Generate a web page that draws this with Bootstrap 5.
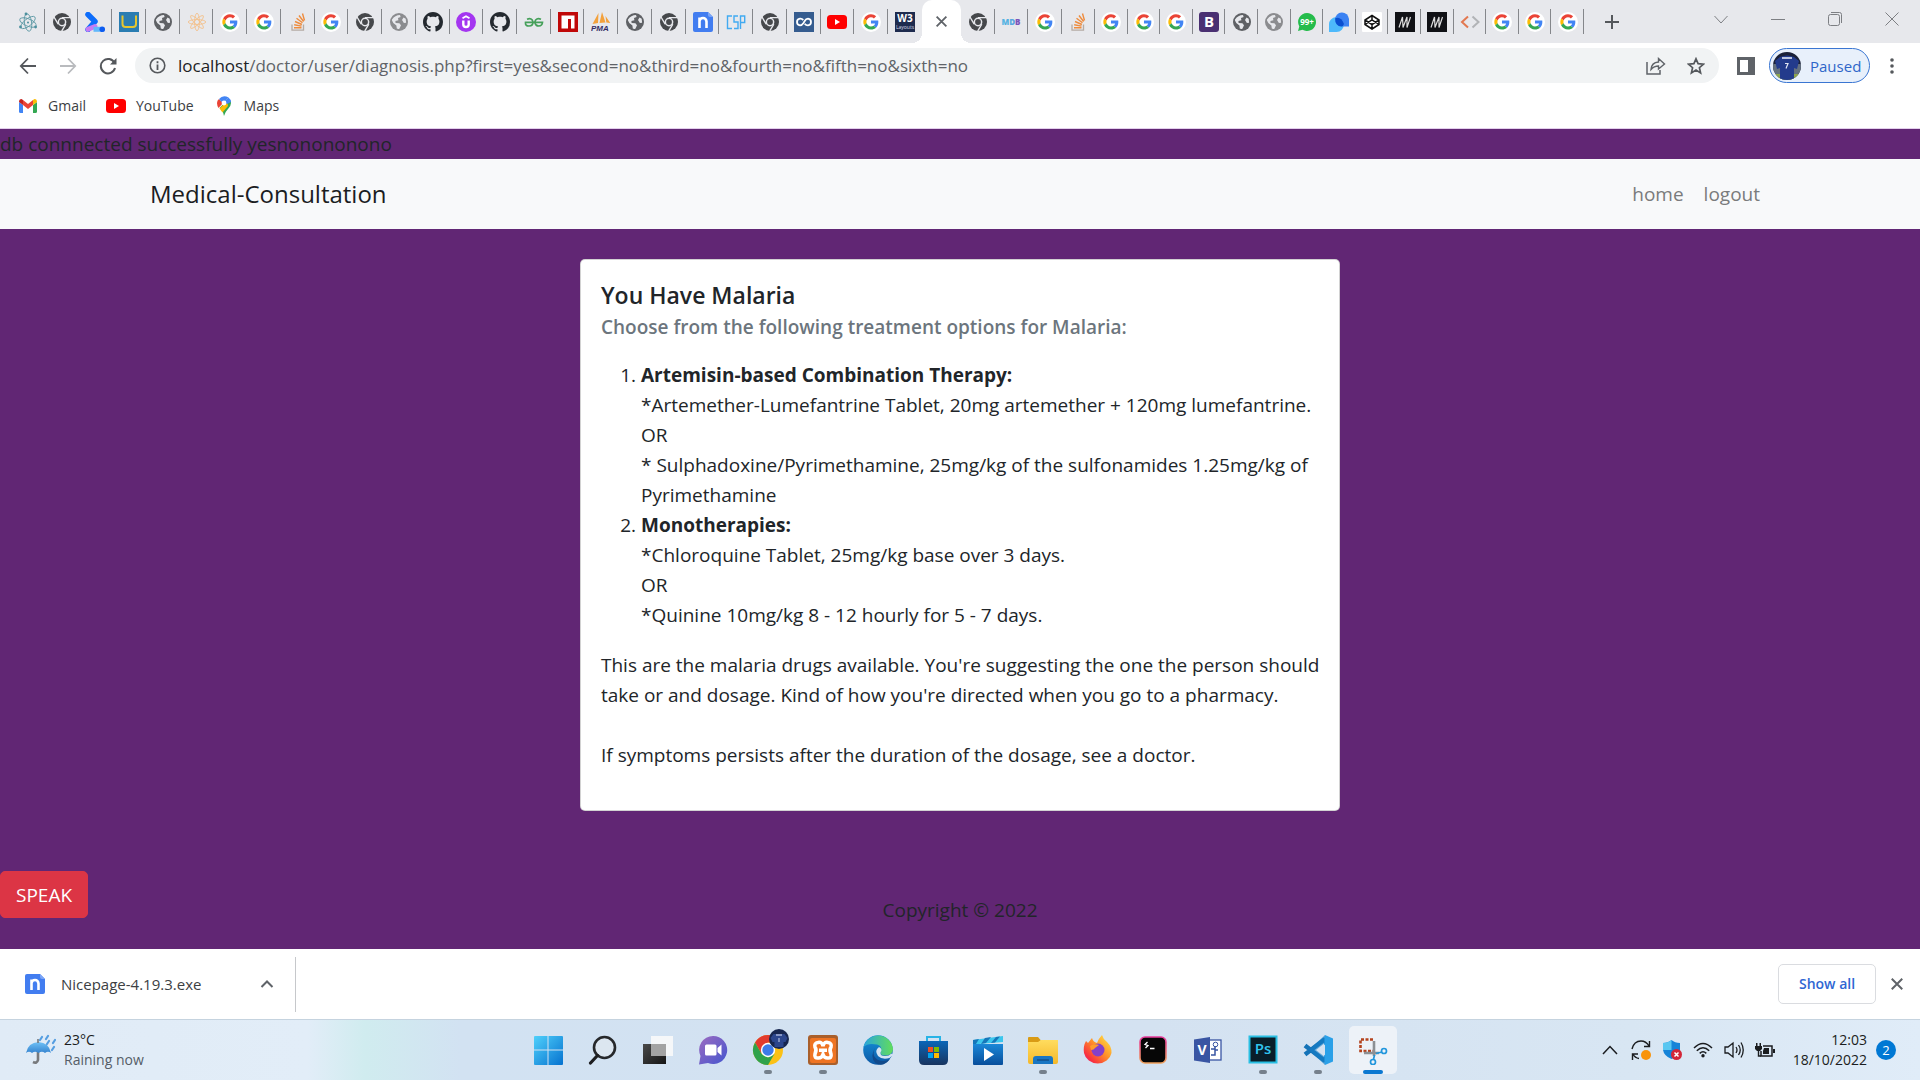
<!DOCTYPE html>
<html lang="en">
<head>
<meta charset="utf-8">
<meta name="viewport" content="width=device-width, initial-scale=1">
<title>Medical-Consultation</title>
<link href="https://cdn.jsdelivr.net/npm/bootstrap@5.3.0/dist/css/bootstrap.min.css" rel="stylesheet">
<style>
  :root { font-size: 20px; --ui: "Open Sans", "Noto Sans", sans-serif; --bs-body-font-family: var(--ui); }
  body { font-family: var(--ui); font-size: 19px; line-height: 30px; color: #212529; background: #fff; }
  svg { display: block; flex: none; }
  .plain { border: 0; background: none; padding: 0; color: inherit; display: flex; align-items: center; justify-content: center; }

  /* browser frame */
  .tabstrip { background: #e7e8ec; height: 43px; padding-left: 11px; }
  .tabset { flex: 0 1 auto; }
  .tabset-a { width: 911px; }
  .tabset-b { width: 134px; }
  .tabset-c { width: 489px; }
  .tab { flex: 1 1 0; min-width: 0; height: 43px; position: relative; }
  .tab::after { content: ""; position: absolute; right: 0; top: 9px; height: 25px; width: 1px; background: #85878b; }
  .tabset-a .tab:last-child::after { display: none; }
  .tab svg { width: 20px; height: 20px; }
  .tone-dark { color: #5f6165; }
  .tone-light { color: #8b8c8f; }
  .tab-current { width: 39px; height: 43px; background: #fff; border-radius: 10px 10px 0 0; position: relative; color: #5f6368; }
  .tab-current::before, .tab-current::after { content: ""; position: absolute; bottom: 0; width: 10px; height: 10px; }
  .tab-current::before { left: -10px; background: radial-gradient(circle at 0 0, transparent 10px, #fff 10px); }
  .tab-current::after { right: -10px; background: radial-gradient(circle at 100% 0, transparent 10px, #fff 10px); }
  .newtab { width: 55px; height: 43px; }
  .winbtn { width: 57px; height: 37px; }
  .toolbar { padding: 5px 6px 0 8px; }
  .navbtn { width: 40px; height: 35px; }
  .omnibox { background: #f1f3f4; border-radius: 18px; height: 35px; padding: 0 3px 0 14px; margin-left: 7px; }
  .urltext { font-size: 17px; line-height: 24px; color: #5f6368; margin-left: 12px; }
  .urltext b { font-weight: 400; color: #202124; }
  .omnibtn { width: 40px; height: 35px; }
  .sidepanel { width: 50px; height: 35px; padding-left: 4px; }
  .menubtn { width: 44px; height: 35px; }
  .profile { width: 101px; height: 35px; border: 1px solid #3a76d2; border-radius: 18px; background: #e8f0fb; color: #2f66c9; font-size: 15px; justify-content: flex-start; padding-left: 3px; gap: 9px; }
  .bookmarks { height: 46px; padding-left: 18px; gap: 20px; font-size: 14px; line-height: 20px; border-bottom: 1px solid #e3cfec; }
  .bookmarks a { color: #3c4043; text-decoration: none; gap: 10px; }

  /* application page */
  .app { background: #612674; }
  .app .navbar { padding: 10px 0; height: 70px; --bs-navbar-brand-font-size: 24px; --bs-navbar-nav-link-padding-x: 10px; --bs-navbar-brand-color: #1b1d1f; background: #f8f9fa; }
  .app .navbar .nav-link { color: #7a7b7c; }
  .app .container { max-width: 1650px; padding: 0 15px; }
  .diagnosis { max-width: 760px; border-radius: 5px; margin-top: 30px; }
  .diagnosis .card-body { padding: 20px 12px 20px 20px; }
  .diagnosis .card-title { font-size: 23px; line-height: 30px; margin-bottom: 10px; font-weight: 600; }
  .diagnosis .card-subtitle { font-size: 19px; line-height: 24px; margin: -5px 0 21px; color: #6c757d; font-weight: 600; }
  .diagnosis ol { padding-left: 40px; margin-bottom: 20px; }
  .diagnosis p { margin-bottom: 20px; }
  .page-end { margin-top: 60px; }
  .speak { font-size: 19px; line-height: 30px; height: 47px; padding: 0 15px; border-radius: 5px; }
  .copyright { padding-top: 24px; }

  /* downloads shelf */
  .shelf { height: 71px; background: #fff; padding: 0 12px 0 25px; border-bottom: 1px solid #c5d3df; font-size: 15px; line-height: 20px; }
  .shelf-item { width: 271px; height: 55px; border-right: 1px solid #c6c8cb; color: #3c4043; padding-right: 18px; gap: 16px; }
  .showall { width: 98px; height: 40px; border: 1px solid #dadce0; border-radius: 5px; background: #fff; color: #2f67d3; font-size: 14px; font-weight: 600; padding: 0; }
  .shelf-close { width: 32px; height: 40px; padding-left: 10px; color: #5f6368; }

  /* taskbar */
  .taskbar { height: 60px; background: linear-gradient(90deg, #e0ebf6 0, #e2edf8 16%, #d0ecef 19%, #d2e2f2 24%, #d4e2f1 60%, #d8e6f3 85%, #e0ecf8 100%); font-size: 14px; line-height: 20px; color: #1b1d20; }
  .taskside { flex: 1 1 0; padding: 0 24px; }
  .weather { gap: 8px; }
  .weather-note { color: #555d67; }
  .app-btn { width: 55px; height: 60px; position: relative; }
  .app-btn svg { width: 30px; height: 30px; position: relative; }
  .running::after { content: ""; position: absolute; left: 24px; bottom: 6px; width: 8px; height: 4px; border-radius: 2px; background: #75808c; }
  .focused::before { content: ""; position: absolute; left: 4px; top: 6px; width: 48px; height: 48px; border-radius: 5px; background: #edf2f8; }
  .focused::after { left: 18px; width: 20px; background: #0b78d1; }
  .traybtn { width: 31px; height: 40px; }
  .clock { margin: 0 9px 0 12px; }
  .alerts { width: 20px; height: 20px; border-radius: 50%; background: #0078d4; color: #fff; font-size: 13px; }
</style>
</head>
<body class="min-vh-100 d-flex flex-column">
<svg width="0" height="0" class="position-absolute" aria-hidden="true">
  <defs>
    <linearGradient id="gWin" x1="0" y1="0" x2="1" y2="1"><stop stop-color="#4fd0fb"/><stop offset="1" stop-color="#0672cf"/></linearGradient>
    <linearGradient id="gChat" x1="0" y1="0" x2="1" y2="1"><stop stop-color="#9d6bc0"/><stop offset="1" stop-color="#4355cf"/></linearGradient>
    <linearGradient id="gEdgeA" x1="0" y1="0" x2="1" y2="0"><stop stop-color="#2aa5dc"/><stop offset="1" stop-color="#62dd5b"/></linearGradient>
    <linearGradient id="gEdgeB" x1="0" y1="0" x2="0" y2="1"><stop stop-color="#1493dc"/><stop offset="1" stop-color="#0d58a5"/></linearGradient>
    <linearGradient id="gStore" x1="0" y1="0" x2="0" y2="1"><stop stop-color="#0a66b8"/><stop offset="1" stop-color="#18345f"/></linearGradient>
    <linearGradient id="gMovie" x1="0" y1="0" x2="0" y2="1"><stop stop-color="#1b88d8"/><stop offset="1" stop-color="#084e9b"/></linearGradient>
    <linearGradient id="gFold" x1="0" y1="0" x2="0" y2="1"><stop stop-color="#ffdc5e"/><stop offset="1" stop-color="#f5b82a"/></linearGradient>
    <linearGradient id="gFox" x1="1" y1="0" x2="0" y2="1"><stop stop-color="#fff04a"/><stop offset=".45" stop-color="#ff9328"/><stop offset=".8" stop-color="#f8313f"/><stop offset="1" stop-color="#e4158d"/></linearGradient>
    <linearGradient id="gTerm" x1="0" y1="0" x2="0" y2="1"><stop stop-color="#e83a9c"/><stop offset="1" stop-color="#eea05b"/></linearGradient>
    <linearGradient id="gUmb" x1="0" y1="0" x2="0" y2="1"><stop stop-color="#6fc1f6"/><stop offset="1" stop-color="#3584d0"/></linearGradient>
    <linearGradient id="gTask" x1="0" y1="0" x2="1" y2="1"><stop stop-color="#4a4a4a"/><stop offset="1" stop-color="#151515"/></linearGradient>
    <linearGradient id="gMdb" x1="0" y1="0" x2="1" y2="0"><stop stop-color="#54b6e2"/><stop offset=".65" stop-color="#57a5de"/><stop offset=".7" stop-color="#7b53b9"/></linearGradient>
    <clipPath id="cAv"><circle cx="14" cy="14" r="14"/></clipPath>
  </defs>
  <symbol id="electron" viewBox="0 0 20 20"><g fill="none" stroke="#5f9aa6" stroke-width=".9"><ellipse cx="10" cy="10.500" rx="8.800" ry="3.600" transform="rotate(22 10 10.500)"/><ellipse cx="10" cy="10.500" rx="8.800" ry="3.600" transform="rotate(82 10 10.500)"/><ellipse cx="10" cy="10.500" rx="8.800" ry="3.600" transform="rotate(142 10 10.500)"/></g><g fill="#4b8f9d"><circle cx="10" cy="10.500" r="1"/><circle cx="2.500" cy="15" r="1.400"/><circle cx="17.600" cy="15" r="1.400"/><circle cx="8" cy="2" r="1.400"/></g></symbol>
  <symbol id="chromegray" viewBox="0 0 20 20"><circle cx="10" cy="10" r="9" fill="#46484b"/><circle cx="10" cy="10" r="4.400" fill="#e7e8ec"/><circle cx="10" cy="10" r="2.900" fill="#46484b"/><path d="M10 5.600h8.300M6.200 12.200L2 5M13.800 12.200L9.700 19.200" stroke="#e7e8ec" stroke-width="1.400"/></symbol>
  <symbol id="dart" viewBox="0 0 20 20"><path d="M3 2.500l7 7L3 17.500" fill="none" stroke="#0d6dfb" stroke-width="5.500" stroke-linecap="round" stroke-linejoin="round"/><path d="M3 17.300L10 14.500" stroke="#c77cf3" stroke-width="5" stroke-linecap="round"/><path d="M8.500 17.300h8" stroke="#62b8fb" stroke-width="5"/><circle cx="17.300" cy="17.200" r="2.800" fill="#0d5cf0"/></symbol>
  <symbol id="upro" viewBox="0 0 20 20"><path fill="#2a7db2" d="M0 0h20v20H0z"/><path d="M3.500 3.500V12q0 3 3 3h7.500q3 0 3-3V3.500" fill="none" stroke="#e5c62f" stroke-width="2"/></symbol>
  <symbol id="globe" viewBox="0 0 20 20"><circle cx="10" cy="10" r="9" fill="currentColor"/><path d="M3 7.500q3-4.500 8-4.500l.6 2-2.600 1 .4 2.200-3 .8.200 2 3.800.2 1.600 2-1.600 3.600q-1.500.5-2.600-.2l-.4-3L4.300 11 3 8.500zM13 8l1.500-2.600 2.200 1.400.4 4-2.200.3z" fill="#e7e8ec"/></symbol>
  <symbol id="atom" viewBox="0 0 20 20"><g fill="none" stroke="#f3c18c" stroke-width=".9"><ellipse cx="10" cy="10" rx="8.800" ry="2.400"/><ellipse cx="10" cy="10" rx="8.800" ry="2.400" transform="rotate(45 10 10)"/><ellipse cx="10" cy="10" rx="8.800" ry="2.400" transform="rotate(90 10 10)"/><ellipse cx="10" cy="10" rx="8.800" ry="2.400" transform="rotate(135 10 10)"/></g></symbol>
  <symbol id="google" viewBox="0 0 20 20"><circle cx="10" cy="10" r="10" fill="#fff"/><g transform="translate(2.300 2.200) scale(.32)"><path fill="#ea4335" d="M24 9.500c3.540 0 6.710 1.220 9.210 3.600l6.850-6.850C35.900 2.380 30.470 0 24 0 14.620 0 6.510 5.380 2.560 13.220l7.980 6.190C12.430 13.720 17.740 9.500 24 9.500z"/><path fill="#4285f4" d="M46.980 24.550c0-1.570-.15-3.090-.38-4.550H24v9.020h12.940c-.58 2.960-2.260 5.480-4.780 7.180l7.730 6c4.510-4.180 7.090-10.360 7.090-17.650z"/><path fill="#fbbc05" d="M10.530 28.590c-.48-1.450-.76-2.990-.76-4.590s.27-3.140.76-4.590l-7.980-6.190C.92 16.460 0 20.120 0 24c0 3.880.92 7.540 2.560 10.780l7.970-6.190z"/><path fill="#34a853" d="M24 48c6.480 0 11.930-2.130 15.890-5.810l-7.730-6c-2.150 1.450-4.920 2.300-8.160 2.300-6.260 0-11.570-4.220-13.470-9.910l-7.980 6.190C6.510 42.620 14.620 48 24 48z"/></g></symbol>
  <symbol id="stack" viewBox="0 0 20 20"><path d="M4 12.500v5.700h11.500v-5.700" fill="none" stroke="#b5aba4" stroke-width="1.300"/><g stroke="#ee8c3e" stroke-width="1.400"><path d="M6 15.800h7.500M6.200 12.800l7.300 1.300M7 9.500l6.900 3M8.500 6.200l6 4.600M11 3.500l4.600 6M14.500 1.500l2 7"/></g></symbol>
  <symbol id="github" viewBox="0 0 16 16"><path fill="#24292f" d="M8 0C3.580 0 0 3.580 0 8c0 3.540 2.290 6.530 5.470 7.590.4.070.55-.17.55-.38 0-.19-.01-.82-.01-1.490-2.010.37-2.530-.49-2.690-.94-.09-.23-.48-.94-.82-1.130-.28-.15-.68-.52-.01-.53.63-.01 1.080.58 1.230.82.72 1.210 1.870.87 2.330.66.070-.52.28-.87.51-1.070-1.780-.2-3.640-.89-3.640-3.950 0-.87.31-1.590.82-2.150-.08-.2-.36-1.020.08-2.120 0 0 .67-.21 2.200.82.640-.18 1.320-.27 2-.27s1.360.09 2 .27c1.530-1.040 2.200-.82 2.200-.82.440 1.100.160 1.920.080 2.120.510.560.820 1.270.820 2.150 0 3.070-1.870 3.750-3.650 3.950.290.250.540.730.540 1.480 0 1.070-.010 1.930-.010 2.200 0 .210.150.460.550.380A8.010 8.010 0 0 0 16 8c0-4.420-3.580-8-8-8z"/></symbol>
  <symbol id="udemy" viewBox="0 0 20 20"><circle cx="10" cy="10" r="10" fill="#a435f0"/><path d="M6.500 6.300L10 4.200l3.500 2.100" fill="none" stroke="#fff" stroke-width="1.800"/><path d="M7.300 8.500v4q0 2.500 2.700 2.500t2.700-2.500v-4" fill="none" stroke="#fff" stroke-width="2.400"/></symbol>
  <symbol id="gfg" viewBox="0 0 20 20"><g fill="none" stroke="#46a05a" stroke-width="1.700"><path d="M3 7.300q5-2 6 2.700 0 4-4 4T1.500 10.300h17q-.3 3.700-3.700 3.700t-4-4Q12 5.300 17 7.300"/></g></symbol>
  <symbol id="npm" viewBox="0 0 20 20"><path fill="#c00808" d="M0 0h20v20H0z"/><path fill="#fff" d="M3.500 3.500h13v13H13V7h-3v9.500H3.500z"/></symbol>
  <symbol id="nice" viewBox="0 0 20 20"><path d="M2 0h13l5 5v13q0 2-2 2H2q-2 0-2-2V2q0-2 2-2z" fill="#427df0"/><path d="M15 0l5 5h-3q-2 0-2-2z" fill="#7ba5f7"/><path d="M6.500 16V5.500M6.500 9Q7 6 10 6t3.500 3.500V16" fill="none" stroke="#fff" stroke-width="2.600"/></symbol>
  <symbol id="csp" viewBox="0 0 20 20"><path d="M6 4H1.500v12.500H6M12 4H8v6h4v6.500H8M14.500 17V4h4.200v6.500h-4" fill="none" stroke="#42aaf1" stroke-width="1.400"/></symbol>
  <symbol id="loops" viewBox="0 0 20 20"><path fill="#355c8f" d="M0 0h20v20H0z"/><path d="M9.300 8Q7.800 6.500 6 6.700 3 7 3 10t3 3.300q2 0 3.500-2.300l1.200-2q1.300-2.300 3.300-2.300 3 .3 3 3.300t-3 3.300q-2 0-3.300-1.600" fill="none" stroke="#fff" stroke-width="1.800"/></symbol>
  <symbol id="youtube" viewBox="0 0 20 20"><rect y="3" width="20" height="14" rx="3.500" fill="#f00"/><path fill="#fff" d="M8 7l5 3-5 3z"/></symbol>
  <symbol id="tawk" viewBox="0 0 20 20"><path d="M0 20V13a7.500 7.500 0 1 1 7.500 7z" fill="#4db9fb"/><path d="M20 14.500V7A7 7 0 1 0 13 14.500z" fill="#3b82f2"/><path d="M6.200 6.200Q12 4 15 12q-1 2.500-2.500 2.500-6.500 0-6.300-8.300z" fill="#0a4fd0"/></symbol>
  <symbol id="codepen" viewBox="0 0 20 20"><rect width="20" height="20" rx="1" fill="#fff"/><path d="M10 3.500l7 4.500v4.500l-7 4.500-7-4.500V8zM10 3.500v4.300M10 17v-4.500M3 8l7 4.500L17 8M3 12.500l7-4.700 7 4.700" fill="none" stroke="#111" stroke-width="1.500"/></symbol>
  <symbol id="mm" viewBox="0 0 20 20"><path fill="#101115" d="M0 0h20v20H0z"/><path d="M4 15.500L7.500 5l.5 10.500L12 5v10.500L15.500 5" fill="none" stroke="#dcdcdc" stroke-width="1.200"/></symbol>
  <symbol id="code" viewBox="0 0 20 20"><path d="M8 4.500L2 10l6 5.500" fill="none" stroke="#e27850" stroke-width="2"/><path d="M12.500 4.500l6 5.500-6 5.500" fill="none" stroke="#b1b3b6" stroke-width="2"/></symbol>
  <symbol id="x" viewBox="0 0 12 12"><path d="M1.500 1.500l9 9M10.500 1.500l-9 9" fill="none" stroke="currentColor" stroke-width="1.700"/></symbol>
</svg>

<header>
  <div class="tabstrip d-flex">
    <div class="tabset tabset-a d-flex">
      <button class="tab plain" aria-label="Electron"><svg><use href="#electron"/></svg></button>
      <button class="tab plain" aria-label="Chrome"><svg><use href="#chromegray"/></svg></button>
      <button class="tab plain" aria-label="Console"><svg><use href="#dart"/></svg></button>
      <button class="tab plain" aria-label="Project"><svg><use href="#upro"/></svg></button>
      <button class="tab plain tone-dark" aria-label="Page"><svg><use href="#globe"/></svg></button>
      <button class="tab plain" aria-label="Atom"><svg><use href="#atom"/></svg></button>
      <button class="tab plain" aria-label="Google"><svg><use href="#google"/></svg></button>
      <button class="tab plain" aria-label="Google"><svg><use href="#google"/></svg></button>
      <button class="tab plain" aria-label="Stack Overflow"><svg><use href="#stack"/></svg></button>
      <button class="tab plain" aria-label="Google"><svg><use href="#google"/></svg></button>
      <button class="tab plain" aria-label="Chrome"><svg><use href="#chromegray"/></svg></button>
      <button class="tab plain tone-light" aria-label="Page"><svg><use href="#globe"/></svg></button>
      <button class="tab plain" aria-label="GitHub"><svg><use href="#github"/></svg></button>
      <button class="tab plain" aria-label="Udemy"><svg><use href="#udemy"/></svg></button>
      <button class="tab plain" aria-label="GitHub"><svg><use href="#github"/></svg></button>
      <button class="tab plain" aria-label="GeeksforGeeks"><svg><use href="#gfg"/></svg></button>
      <button class="tab plain" aria-label="npm"><svg><use href="#npm"/></svg></button>
      <button class="tab plain" aria-label="phpMyAdmin"><svg viewBox="0 0 20 20"><path d="M7.500 1l-6 11 5.500-1zM11 0L8.500 11l6-.5zM14.500 4l.8 6.500 4 .5z" fill="#f3a13c"/><text x="0" y="19" font-size="8" font-weight="700" font-style="italic" font-family="Liberation Sans, sans-serif" fill="#332d64">PMA</text></svg></button>
      <button class="tab plain tone-dark" aria-label="Page"><svg><use href="#globe"/></svg></button>
      <button class="tab plain" aria-label="Chrome"><svg><use href="#chromegray"/></svg></button>
      <button class="tab plain" aria-label="Nicepage"><svg><use href="#nice"/></svg></button>
      <button class="tab plain" aria-label="CSP"><svg><use href="#csp"/></svg></button>
      <button class="tab plain" aria-label="Chrome"><svg><use href="#chromegray"/></svg></button>
      <button class="tab plain" aria-label="Loops"><svg><use href="#loops"/></svg></button>
      <button class="tab plain" aria-label="YouTube"><svg><use href="#youtube"/></svg></button>
      <button class="tab plain" aria-label="Google"><svg><use href="#google"/></svg></button>
      <button class="tab plain" aria-label="W3 Layouts"><svg viewBox="0 0 20 20"><path fill="#1e2b4e" d="M0 0h20v20H0z"/><text x="10" y="10" font-size="10" text-anchor="middle" font-weight="700" fill="#fff">W3</text><text x="10" y="17" font-size="5" text-anchor="middle" fill="#d8dbe5">Layouts</text></svg></button>
    </div>
    <button class="tab-current plain" aria-label="Close tab"><svg width="13" height="13"><use href="#x"/></svg></button>
    <div class="tabset tabset-b d-flex">
      <button class="tab plain" aria-label="Chrome"><svg><use href="#chromegray"/></svg></button>
      <button class="tab plain" aria-label="MDB"><svg viewBox="0 0 20 20"><text x="10" y="13" font-size="8" font-weight="800" text-anchor="middle" fill="url(#gMdb)">MDB</text></svg></button>
      <button class="tab plain" aria-label="Google"><svg><use href="#google"/></svg></button>
      <button class="tab plain" aria-label="Stack Overflow"><svg><use href="#stack"/></svg></button>
    </div>
    <div class="tabset tabset-c d-flex">
      <button class="tab plain" aria-label="Google"><svg><use href="#google"/></svg></button>
      <button class="tab plain" aria-label="Google"><svg><use href="#google"/></svg></button>
      <button class="tab plain" aria-label="Google"><svg><use href="#google"/></svg></button>
      <button class="tab plain" aria-label="Bootstrap"><svg viewBox="0 0 20 20"><rect width="20" height="20" rx="3" fill="#4a3072"/><text x="10" y="15" font-size="15" text-anchor="middle" font-weight="700" fill="#fff">B</text></svg></button>
      <button class="tab plain tone-dark" aria-label="Page"><svg><use href="#globe"/></svg></button>
      <button class="tab plain tone-light" aria-label="Page"><svg><use href="#globe"/></svg></button>
      <button class="tab plain" aria-label="WhatsApp"><svg viewBox="0 0 20 20"><path d="M10 1a9 9 0 1 1-4.500 16.800L1 19l1.300-4.500A9 9 0 0 1 10 1z" fill="#25bc4b"/><text x="10" y="13" font-size="8" text-anchor="middle" font-weight="700" fill="#fff">99+</text></svg></button>
      <button class="tab plain" aria-label="Chat"><svg><use href="#tawk"/></svg></button>
      <button class="tab plain" aria-label="CodePen"><svg><use href="#codepen"/></svg></button>
      <button class="tab plain" aria-label="M"><svg><use href="#mm"/></svg></button>
      <button class="tab plain" aria-label="M"><svg><use href="#mm"/></svg></button>
      <button class="tab plain" aria-label="Code"><svg><use href="#code"/></svg></button>
      <button class="tab plain" aria-label="Google"><svg><use href="#google"/></svg></button>
      <button class="tab plain" aria-label="Google"><svg><use href="#google"/></svg></button>
      <button class="tab plain" aria-label="Google"><svg><use href="#google"/></svg></button>
    </div>
    <button class="newtab plain" aria-label="New tab"><svg width="16" height="16" viewBox="0 0 16 16"><path d="M8 1v14M1 8h14" stroke="#55585c" stroke-width="2"/></svg></button>
    <div class="d-flex ms-auto">
      <button class="winbtn plain" aria-label="Search tabs"><svg width="14" height="14" viewBox="0 0 14 14"><path d="M.5 4l6.500 7 6.500-7" fill="none" stroke="#7d7f83"/></svg></button>
      <button class="winbtn plain" aria-label="Minimize"><svg width="14" height="14" viewBox="0 0 14 14"><path d="M0 7.500h14" stroke="#7d7f83"/></svg></button>
      <button class="winbtn plain" aria-label="Restore"><svg width="14" height="14" viewBox="0 0 14 14"><rect x=".5" y="2.500" width="11" height="11" rx="2" fill="none" stroke="#7d7f83"/><path d="M3 .5h8.500q2 0 2 2V11" fill="none" stroke="#7d7f83"/></svg></button>
      <button class="winbtn plain" aria-label="Close"><svg width="14" height="14" viewBox="0 0 14 14"><path d="M.5.5l13 13M13.500.5l-13 13" stroke="#7d7f83"/></svg></button>
    </div>
  </div>
  <div class="toolbar d-flex align-items-center">
    <button class="navbtn plain" aria-label="Back"><svg width="18" height="18" viewBox="0 0 18 18"><path d="M17 9H2M9 1.500L1.800 9 9 16.500" fill="none" stroke="#55585c" stroke-width="1.800"/></svg></button>
    <button class="navbtn plain" aria-label="Forward"><svg width="18" height="18" viewBox="0 0 18 18"><path d="M1 9h15M9 1.500L16.200 9 9 16.500" fill="none" stroke="#b9bbbe" stroke-width="1.800"/></svg></button>
    <button class="navbtn plain" aria-label="Reload"><svg width="18" height="18" viewBox="0 0 18 18"><path d="M15.500 6A7.200 7.200 0 1 0 16 11" fill="none" stroke="#55585c" stroke-width="2"/><path d="M17.500 1v6.500H11z" fill="#55585c"/></svg></button>
    <div class="omnibox d-flex align-items-center flex-grow-1">
      <svg width="17" height="17" viewBox="0 0 17 17"><circle cx="8.500" cy="8.500" r="7.300" fill="none" stroke="#55585c" stroke-width="1.600"/><path d="M8.500 7.500V13M8.500 4.200v2" stroke="#55585c" stroke-width="1.800"/></svg>
      <div class="urltext flex-grow-1"><b>localhost</b>/doctor/user/diagnosis.php?first=yes&amp;second=no&amp;third=no&amp;fourth=no&amp;fifth=no&amp;sixth=no</div>
      <button class="omnibtn plain" aria-label="Share"><svg width="20" height="18" viewBox="0 0 20 18"><path d="M1 5v12h13v-4" fill="none" stroke="#5f6368" stroke-width="1.500"/><path d="M5 12.500Q5.500 5.500 12.500 5V1.500L18.500 7l-6 5V9Q8 9 5 12.500z" fill="none" stroke="#5f6368" stroke-width="1.400"/></svg></button>
      <button class="omnibtn plain" aria-label="Bookmark this page"><svg width="18" height="18" viewBox="0 0 18 18"><path d="M9 1.800l2.100 4.900 5.300.5-4 3.500 1.200 5.200L9 13.100l-4.600 2.800 1.200-5.200-4-3.500 5.300-.5z" fill="none" stroke="#55585c" stroke-width="1.700"/></svg></button>
    </div>
    <button class="sidepanel plain" aria-label="Side panel"><svg width="18" height="18" viewBox="0 0 18 18"><path fill="#5f6368" d="M0 0h18v18H0z"/><path fill="#fff" d="M3 3h8v12H3z"/></svg></button>
    <button class="profile plain"><svg width="28" height="28" viewBox="0 0 28 28"><g clip-path="url(#cAv)"><path fill="#1b2138" d="M0 0h28v28H0z"/><path fill="#64717f" d="M0 12h28v10H0z"/><path fill="#8da54e" d="M0 22h28v6H0z"/><path fill="#233b8c" d="M7 5q7-3 14 0l5 4-2 8-3-1v12H7V16l-3 1-2-8z"/><path stroke="#bcc5df" stroke-width="1.800" d="M9 6h10"/><path fill="none" stroke="#dfe4f2" stroke-width="1.200" d="M12 11.500h3l-2 5"/></g></svg>Paused</button>
    <button class="menubtn plain" aria-label="Menu"><svg width="4" height="16" viewBox="0 0 4 16" fill="#55585c"><circle cx="2" cy="2" r="1.800"/><circle cx="2" cy="8" r="1.800"/><circle cx="2" cy="14" r="1.800"/></svg></button>
  </div>
  <nav class="bookmarks d-flex align-items-center" aria-label="Bookmarks">
    <a href="#" class="d-flex align-items-center"><svg width="20" height="16" viewBox="0 0 20 16"><path fill="#4285f4" d="M1 4v9.500Q1 15 2.500 15H5V7z"/><path fill="#34a853" d="M19 4v9.500q0 1.500-1.500 1.500H15V7z"/><path fill="#ea4335" d="M5 7V2l5 4 5-4v5l-5 4z"/><path fill="#c5221f" d="M1 4q0-3 2.500-3L5 2v5L1 4z"/><path fill="#fbbc04" d="M19 4q0-3-2.500-3L15 2v5l4-3z"/></svg>Gmail</a>
    <a href="#" class="d-flex align-items-center"><svg width="20" height="20"><use href="#youtube"/></svg>YouTube</a>
    <a href="#" class="d-flex align-items-center"><svg width="20" height="20" viewBox="0 0 20 20"><path fill="#34a853" d="M10 20Q9 14 5.500 12L14 3q3 1 3 4 0 3-3 6t-4 7z"/><path fill="#fbbc04" d="M5.500 12.500L13 5l1 5-5.500 6.500z"/><path fill="#ea4335" d="M5 3l4 4-4.500 5Q3 9.500 3 7q0-2.500 2-4z"/><path fill="#4285f4" d="M5 3q4-4.500 9.500-1.500L9 7.500z"/><path fill="#4285f4" d="M14.500 1.500Q17 3.500 17 6l-4 2-3-2z"/><circle cx="10" cy="7" r="2.400" fill="#fff"/></svg>Maps</a>
  </nav>
</header>

<main class="app flex-grow-1 d-flex flex-column">
  <div>db connnected successfully yesnonononono</div>
  <nav class="navbar navbar-expand">
    <div class="container">
      <a class="navbar-brand m-0" href="#">Medical-Consultation</a>
      <div class="navbar-nav ms-auto">
        <a class="nav-link" href="#">home</a>
        <a class="nav-link" href="#">logout</a>
      </div>
    </div>
  </nav>
  <section class="diagnosis card w-100 mx-auto">
    <div class="card-body">
      <h5 class="card-title">You Have Malaria</h5>
      <h6 class="card-subtitle">Choose from the following treatment options for Malaria:</h6>
      <ol>
        <li><b>Artemisin-based Combination Therapy:</b><br>*Artemether-Lumefantrine Tablet, 20mg artemether + 120mg lumefantrine.<br>OR<br>* Sulphadoxine/Pyrimethamine, 25mg/kg of the sulfonamides 1.25mg/kg of Pyrimethamine</li>
        <li><b>Monotherapies:</b><br>*Chloroquine Tablet, 25mg/kg base over 3 days.<br>OR<br>*Quinine 10mg/kg 8 - 12 hourly for 5 - 7 days.</li>
      </ol>
      <p>This are the malaria drugs available. You're suggesting the one the person should take or and dosage. Kind of how you're directed when you go to a pharmacy.<br><br>If symptoms persists after the duration of the dosage, see a doctor.</p>
    </div>
  </section>
  <div class="page-end d-flex align-items-start">
    <div class="col"><button class="speak btn btn-danger">SPEAK</button></div>
    <footer class="copyright">Copyright © 2022</footer>
    <div class="col"></div>
  </div>
</main>

<section class="shelf d-flex align-items-center" aria-label="Downloads">
  <div class="shelf-item d-flex align-items-center">
    <svg width="20" height="20"><use href="#nice"/></svg>
    <span class="flex-grow-1">Nicepage-4.19.3.exe</span>
    <button class="plain" aria-label="Download options"><svg width="20" height="12" viewBox="0 0 20 12"><path d="M4.500 9L10 3.500 15.500 9" fill="none" stroke="#5f6368" stroke-width="2"/></svg></button>
  </div>
  <button class="showall ms-auto">Show all</button>
  <button class="shelf-close plain" aria-label="Close downloads"><svg width="14" height="14"><use href="#x"/></svg></button>
</section>

<footer class="taskbar d-flex align-items-center">
  <div class="taskside weather d-flex align-items-center">
    <svg width="32" height="32" viewBox="-2 0 32 32"><path d="M12 14v12q-1 4-5 2" fill="none" stroke="#77797c" stroke-width="2.600"/><path d="M0 19Q2 8.500 12.500 8 23 8.500 25 19q-3-2.500-6 0-3-2.500-6.500 0-3.500-2.500-6.500 0-3-2.500-6 0z" fill="url(#gUmb)"/><path d="M12 5v4" stroke="#77797c" stroke-width="1.600"/><path d="M16 3l-2 3M22 2l-2 3M23 7l-2 3M29 6l-2 3M28 13l-2 3" stroke="#559ee1" stroke-width="2.200" stroke-linecap="round"/></svg>
    <div><div>23°C</div><div class="weather-note">Raining now</div></div>
  </div>
  <div class="d-flex">
    <button class="app-btn plain" aria-label="Start"><svg viewBox="0 0 30 30"><path fill="url(#gWin)" d="M1 2q0-1 1-1h12.500v13.500H1zM15.500 1H29q1 0 1 1v12.500H15.500zM1 15.500h13.500V30H2q-1 0-1-1zM15.500 15.500H30V29q0 1-1 1H15.500z"/></svg></button>
    <button class="app-btn plain" aria-label="Search"><svg viewBox="0 0 30 30"><circle cx="16.500" cy="12.500" r="10.500" fill="#dce6f0" stroke="#26282b" stroke-width="2.600"/><path d="M9.500 20.500L2.500 28" stroke="#1d1e20" stroke-width="3.200" stroke-linecap="round"/></svg></button>
    <button class="app-btn plain" aria-label="Task view"><svg viewBox="0 0 30 30"><path fill="url(#gTask)" d="M0 9h23v20H0z"/><path fill="#f7f8fa" fill-opacity=".92" d="M8 1h22v20H8z"/><path fill="#a3a3a3" d="M8 9h15v12H8z"/></svg></button>
    <button class="app-btn plain" aria-label="Chat"><svg viewBox="0 0 30 30"><path d="M15 1a14 14 0 1 1-5 27L1 29.500 2.500 21A14 14 0 0 1 15 1z" fill="url(#gChat)"/><rect x="7" y="9.500" width="11.500" height="11" rx="1.500" fill="#fff"/><path d="M19.500 13l4-3.500v11l-4-3.500z" fill="#fff"/></svg></button>
    <button class="app-btn plain running" aria-label="Chrome"><svg viewBox="0 0 30 30" overflow="visible"><circle cx="15" cy="15" r="15" fill="#fbc116"/><path fill="#e33b2e" d="M2 7.500A15 15 0 0 1 28 7.500H15L8.500 18.800z"/><path fill="#30a24c" d="M2 7.500A15 15 0 0 0 15 30l6.500-11.300L15 22.500l-6.500-3.700z"/><circle cx="15" cy="15" r="7.200" fill="#fff"/><circle cx="15" cy="15" r="5.700" fill="#3e7be9"/><circle cx="26" cy="4" r="10" fill="#17264f"/><path fill="#2c468d" d="M20.500-1h11l3 4-2 4h-2v5h-9V7h-2l-2-4z"/><path d="M23 0h6M26 3v4" stroke="#a5b3d8" stroke-width="1.300"/></svg></button>
    <button class="app-btn plain running" aria-label="XAMPP"><svg viewBox="0 0 30 30"><rect width="30" height="30" rx="3" fill="#a95f2b"/><rect x="2" y="3" width="26" height="25" rx="2" fill="#ef7423"/><path d="M15 11Q14 6.500 10 7.500 6 8 7 12q2 3 0 7-1 4.500 3.500 4Q14 23 15 19.500q1 3.500 4.500 3.500 4.500.5 3.500-4-2-4 0-7 1-4-3-4.500-4-1-5 3.500zM11 15.300h8" fill="none" stroke="#fff" stroke-width="3.600"/></svg></button>
    <button class="app-btn plain" aria-label="Edge"><svg viewBox="0 0 30 30"><circle cx="15" cy="15" r="14.800" fill="url(#gEdgeB)"/><path fill="url(#gEdgeA)" d="M.5 12A15 15 0 0 1 30 14q-.5 6.500-8 6.500-5-.3-4.500-3Q20 11 14 9.500 5 7.500.5 12z"/><path fill="#d4e3f2" d="M17.500 17.500Q17 21 22 21q4 0 6.500-2.500l1.500 1.500-3.500 3Q19 25 15 21q-4-5.500 1-9 4 2 1.500 5.500z"/><path fill="#114a8b" d="M12 13q-4 8 3 12 6 2.500 12-1Q20 33 12.500 28 6.500 22 12 13z"/></svg></button>
    <button class="app-btn plain" aria-label="Microsoft Store"><svg viewBox="0 0 30 30"><path d="M9 7V2h13v5" fill="none" stroke="#28b3e6" stroke-width="2"/><path fill="url(#gStore)" d="M1 6h29v19q0 5-5 5H6q-5 0-5-5z"/><path fill="#f25022" d="M10 12h5v5h-5z"/><path fill="#7fba00" d="M16 12h5v5h-5z"/><path fill="#00a4ef" d="M10 18h5v5h-5z"/><path fill="#ffb900" d="M16 18h5v5h-5z"/></svg></button>
    <button class="app-btn plain" aria-label="Movies"><svg viewBox="0 0 30 30"><path fill="#3bc6ed" d="M0 5L30 1v6L6 9H0z"/><path fill="#1677ba" d="M0 5l6-1-3 5H0zM12 3l6-1-5 6-5 1zM23 2l4-.5-5 6-4 .5z"/><path fill="url(#gMovie)" d="M0 9h30v20q0 1-1 1H1q-1 0-1-1z"/><path fill="#fff" d="M11 13l10 6.500L11 26z"/></svg></button>
    <button class="app-btn plain running" aria-label="File Explorer"><svg viewBox="0 0 30 30"><path fill="#d99b15" d="M0 3q0-1 1-1h9l3 3.500L10 8H0z"/><path fill="url(#gFold)" d="M0 7h10l3-2h17v22q0 2-2 2H2q-2 0-2-2z"/><path fill="#1976c3" d="M5 29v-5q0-3 3-3h14q3 0 3 3v5z"/><path d="M9 25h12" stroke="#134e86" stroke-width="1.400"/></svg></button>
    <button class="app-btn plain" aria-label="Firefox"><svg viewBox="0 0 30 30"><path fill="url(#gFox)" d="M3 6l2 2 4-5q1 4 5 5 2-5 5-8 1 4 5 7 5 5 4.500 11A14 13 0 0 1 1 18Q0 11 3 6z"/><circle cx="15" cy="15" r="6.500" fill="#8440c9"/><path fill="#ff9b2a" d="M7 11q4-3 9-1l-4 3q-1 2-4 2z"/></svg></button>
    <button class="app-btn plain" aria-label="Terminal"><svg viewBox="0 0 30 30"><rect x="2" y="2" width="26" height="26" rx="5" fill="#060606" stroke="url(#gTerm)" stroke-width="1.600"/><path d="M9.500 7L7 9.500l3 1L7.500 13M12 13.500h4.500" fill="none" stroke="#fff" stroke-width="1.300"/></svg></button>
    <button class="app-btn plain" aria-label="Visio"><svg viewBox="0 0 30 30"><rect x="14" y="5" width="14" height="20" fill="#fff" stroke="#3955a3" stroke-width="1.300"/><path d="M18 20h4v-5h3M22 11v4M18 14h4" fill="none" stroke="#3955a3" stroke-width="1.500"/><circle cx="22.500" cy="9.500" r="2.300" fill="none" stroke="#3955a3"/><path fill="#3955a3" d="M1 4.500L17 2v26L1 25.500z"/><text x="9" y="20" font-size="14" font-weight="700" text-anchor="middle" fill="#fff">V</text></svg></button>
    <button class="app-btn plain running" aria-label="Photoshop"><svg viewBox="0 0 30 30"><path fill="#091e29" stroke="#29bfe3" stroke-width="2" d="M1.500 1.500h27v26h-27z"/><text x="15" y="19" font-size="15" font-weight="600" text-anchor="middle" fill="#31c5ef">Ps</text></svg></button>
    <button class="app-btn plain running" aria-label="Visual Studio Code"><svg viewBox="0 0 30 30"><path d="M2 10.500L22 26M2 19.500L22 4" stroke="#1473b8" stroke-width="4.500"/><path fill="#2aa0e8" d="M22 0l8 3.500v23L22 30l-1-4V4z"/><path fill="#1680c9" d="M22 0v8l-9 7 9 7v8L7 16v-2z" fill-opacity=".55"/><path fill="#d4e2f1" d="M22 9.500v11L14.500 15z"/></svg></button>
    <button class="app-btn plain running focused" aria-label="Snipping Tool"><svg viewBox="0 0 30 30"><path d="M15 4.500H2.500V16H15" fill="none" stroke="#b4431d" stroke-width="2.600" stroke-dasharray="3 1.500"/><path d="M16 6v15M6 18h15" stroke="#8c9094" stroke-width="2.600"/><g fill="none" stroke="#2196dc" stroke-width="1.700"><circle cx="26" cy="16" r="2.500"/><circle cx="15" cy="27" r="2.500"/><path d="M18 18.500l6-1.500M16.500 20L15.500 24.500"/></g></svg></button>
  </div>
  <div class="taskside d-flex align-items-center justify-content-end">
    <button class="traybtn plain" aria-label="Hidden icons"><svg width="16" height="10" viewBox="0 0 16 10"><path d="M1 9l7-7.500L15 9" fill="none" stroke="#1b1d20" stroke-width="1.500"/></svg></button>
    <button class="traybtn plain" aria-label="Updates"><svg width="20" height="20" viewBox="0 0 20 20"><path d="M1 9Q3 1 10 1q5 0 8 5M18.500 1v5.500H13M8 18.500Q4 18 2 14M1.500 20v-6H7" fill="none" stroke="#1b1d20" stroke-width="1.400"/><circle cx="15" cy="15" r="5" fill="#f8940c"/></svg></button>
    <button class="traybtn plain" aria-label="Security"><svg width="20" height="20" viewBox="0 0 20 20"><path fill="#1684d8" d="M1 3q5 0 8.500-3Q13 3 18 3v7q-1 6-8.500 9Q2 16 1 10z"/><path fill="#59c7f1" d="M1 3q5 0 8.500-3v10H1z"/><circle cx="14.500" cy="14.500" r="5.500" fill="#d32638"/><path d="M12.500 12.500l4 4M16.500 12.500l-4 4" stroke="#fff" stroke-width="1.500"/></svg></button>
    <button class="traybtn plain" aria-label="Wi-Fi"><svg width="20" height="16" viewBox="0 0 20 16"><path d="M1 6q9-9 18 0M3.800 8.700q6.200-6 12.400 0M6.700 11.400q3.300-3.200 6.600 0" fill="none" stroke="#1b1d20" stroke-width="1.500"/><circle cx="10" cy="13.800" r="1.700" fill="#1b1d20"/></svg></button>
    <button class="traybtn plain" aria-label="Volume"><svg width="20" height="18" viewBox="0 0 20 18"><path d="M1 6v6h3l5 4V2L4 6zM12 6q2 3 0 6M14.500 4q3.500 5 0 10M17 1.500q4.500 7.500 0 15" fill="none" stroke="#1b1d20" stroke-width="1.300"/></svg></button>
    <button class="traybtn plain" aria-label="Battery"><svg width="20" height="17" viewBox="0 0 20 17"><path d="M8 4h9v10H6V9" fill="none" stroke="#1b1d20" stroke-width="1.500"/><path fill="#1b1d20" d="M9 6h5v6H8V9zM18 7h2v4h-2zM0 4h7v3L5 9H2L0 7zM1 1h1.500v3H1zM4.500 1H6v3H4.500z"/><path d="M3.500 9v5H6" fill="none" stroke="#1b1d20" stroke-width="1.400"/></svg></button>
    <div class="clock text-end"><div>12:03</div><div>18/10/2022</div></div>
    <button class="alerts plain">2</button>
  </div>
</footer>
<script src="https://cdn.jsdelivr.net/npm/bootstrap@5.3.0/dist/js/bootstrap.bundle.min.js"></script>
</body>
</html>
